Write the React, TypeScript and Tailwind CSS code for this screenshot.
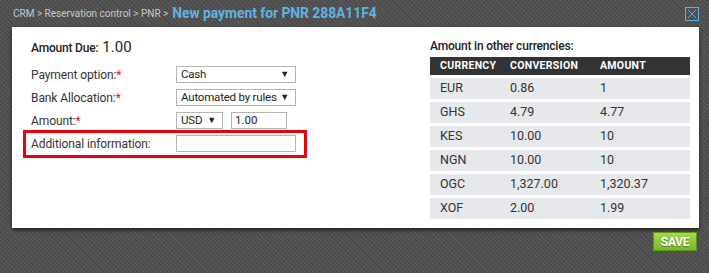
import React from "react";

const rates = [
  ["EUR", "0.86", "1"],
  ["GHS", "4.79", "4.77"],
  ["KES", "10.00", "10"],
  ["NGN", "10.00", "10"],
  ["OGC", "1,327.00", "1,320.37"],
  ["XOF", "2.00", "1.99"],
];

const Select = ({ value, w }: { value: string; w: string }) => (
  <div className={`${w} shrink-0 h-[17px] border border-[#b5b5b5] bg-white flex items-center justify-between pl-[4px] pr-[6px] text-[11.5px] tracking-[-0.2px] text-[#222] whitespace-nowrap`}>
    <span>{value}</span>
    <span className="text-[9px] text-[#222]">▼</span>
  </div>
);

const Label = ({ text, req }: { text: string; req?: boolean }) => (
  <div className="w-[145px] shrink-0 text-[12px] tracking-[-0.1px] text-[#333] whitespace-nowrap">
    {text}
    {req && <span className="text-[#e02020]">*</span>}
  </div>
);

export default function App() {
  return (
    <div
      className="w-[709px] h-[273px] overflow-hidden bg-[repeating-linear-gradient(45deg,#585858_0px,#585858_1.5px,#4a4a4a_1.5px,#4a4a4a_3px)]"
      style={{ fontFamily: "Roboto, 'Liberation Sans', sans-serif" }}
    >
      <div className="h-[27px] flex items-center pl-[13px] pr-[10px]">
        <span className="text-[10px] text-[#c9c9c9]">CRM &gt; Reservation control &gt; PNR &gt;</span>
        <span className="ml-[4px] text-[13.8px] font-bold text-[#5fb3e4]">New payment for PNR 288A11F4</span>
        <div className="ml-auto w-[14px] h-[14px] border border-[#5fb3e4] flex items-center justify-center">
          <svg width="10" height="10" viewBox="0 0 10 10">
            <path d="M1 1L9 9M9 1L1 9" stroke="#5fb3e4" strokeWidth="1" />
          </svg>
        </div>
      </div>

      <div className="ml-[12px] w-[687px] h-[201px] bg-white flex shadow-[0_2px_4px_rgba(0,0,0,0.6)]">
        <div className="relative w-[418px] pl-[19px] pt-[9px]">
          <div className="flex items-baseline h-[20px] text-[#222]">
            <span className="text-[12px] font-medium tracking-[-0.2px]">Amount Due:</span>
            <span className="ml-[4px] text-[15px]">1.00</span>
          </div>
          <div className="mt-[10px] flex flex-col gap-[6px]">
            <div className="flex items-center h-[17px]">
              <Label text="Payment option:" req />
              <Select value="Cash" w="w-[120px]" />
            </div>
            <div className="flex items-center h-[17px]">
              <Label text="Bank Allocation:" req />
              <Select value="Automated by rules" w="w-[120px]" />
            </div>
            <div className="flex items-center h-[17px]">
              <Label text="Amount:" req />
              <Select value="USD" w="w-[47px]" />
              <div className="ml-[8px] w-[56px] h-[17px] border border-[#b5b5b5] pl-[3px] text-[11.5px] text-[#222] flex items-center">1.00</div>
            </div>
            <div className="flex items-center h-[17px]">
              <Label text="Additional information:" />
              <div className="w-[120px] h-[17px] border border-[#b5b5b5] bg-white" />
            </div>
          </div>
          <div className="absolute left-[11px] top-[103px] w-[284px] h-[28px] border-[3px] border-[#e8000b]" />
        </div>

        <div className="w-[260px] pt-[10px]">
          <div className="h-[18px] text-[12px] font-medium tracking-[-0.2px] text-[#222] flex items-center">Amount in other currencies:</div>
          <div className="mt-[2px] h-[18px] bg-[#333333] flex items-center text-[10.5px] font-bold text-white tracking-[0.3px]">
            <div className="w-[80px] pl-[10px]">CURRENCY</div>
            <div className="w-[90px]">CONVERSION</div>
            <div>AMOUNT</div>
          </div>
          <div className="mt-[3px] flex flex-col gap-[3px]">
            {rates.map((r) => (
              <div key={r[0]} className="h-[21px] bg-[#e6e8ec] flex items-center text-[12.5px] text-[#333]">
                <div className="w-[80px] pl-[10px]">{r[0]}</div>
                <div className="w-[90px]">{r[1]}</div>
                <div>{r[2]}</div>
              </div>
            ))}
          </div>
        </div>
      </div>

      <div className="flex justify-end pr-[12px] pt-[4px]">
        <div className="w-[44px] h-[19px] border border-[#5d9a12] bg-[linear-gradient(#a6d84f,#7bb82b)] flex items-center justify-center text-[12px] font-bold text-white [text-shadow:0_1px_1px_rgba(0,0,0,0.4)] tracking-[-0.3px]">
          SAVE
        </div>
      </div>
    </div>
  );
}
